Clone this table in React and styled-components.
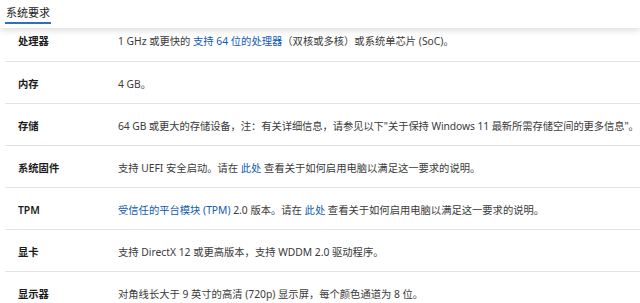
import React from 'react'
import styled, { createGlobalStyle } from 'styled-components'

const GlobalStyle = createGlobalStyle`
    html, body {
        margin: 0;
        padding: 0;
        background: #fff;
    }
    body {
        font-family: "Noto Sans", "Noto Sans CJK SC", sans-serif;
        color: #262626;
    }
`

const rows = [
    { label: '处理器', value: [
        '1 GHz 或更快的 ', { link: '支持 64 位的处理器' }, '（双核或多核）或系统单芯片 (SoC)。'
    ] },
    { label: '内存', value: ['4 GB。'] },
    { label: '存储', tight: true, value: [
        '64 GB 或更大的存储设备，注：有关详细信息，请参见以下"关于保持 Windows 11 最新所需存储空间的更多信息"。'
    ] },
    { label: '系统固件', value: [
        '支持 UEFI 安全启动。请在 ', { link: '此处' }, ' 查看关于如何启用电脑以满足这一要求的说明。'
    ] },
    { label: 'TPM', light: true, value: [
        { link: '受信任的平台模块 (TPM)' }, ' 2.0 版本。请在 ', { link: '此处' }, ' 查看关于如何启用电脑以满足这一要求的说明。'
    ] },
    { label: '显卡', value: ['支持 DirectX 12 或更高版本，支持 WDDM 2.0 驱动程序。'] },
    { label: '显示器', value: ['对角线长大于 9 英寸的高清 (720p) 显示屏，每个颜色通道为 8 位。'] },
]

const App = () => {
    return (
        <Page>
            <GlobalStyle />
            <TabBar>
                <Tab>系统要求</Tab>
            </TabBar>
            <Table>
                {rows.map(row => (
                    <Row key={row.label}>
                        <Label $light={row.light}>{row.label}</Label>
                        <Value $tight={row.tight}>
                            {row.value.map((part, i) => (
                                typeof part === 'string'
                                    ? <span key={i}>{part}</span>
                                    : <Link key={i}>{part.link}</Link>
                            ))}
                        </Value>
                    </Row>
                ))}
            </Table>
        </Page>
    )
}

const Page = styled.div`
    width: 640px;
    height: 303px;
    overflow: hidden;
    background: #fff;
`

const TabBar = styled.div`
    height: 28px;
    padding-left: 5px;
    display: flex;
    align-items: flex-start;
    position: relative;
    z-index: 1;
    box-shadow: 0 3px 6px rgba(0, 0, 0, .12);
    background: #fff;
`

const Tab = styled.div`
    font-size: 11px;
    line-height: 14px;
    padding: 6px 1px 2px;
    color: #222;
    border-bottom: 2px solid #2f6fbf;
`

const Table = styled.div`
    display: flex;
    flex-direction: column;
`

const Row = styled.div`
    display: grid;
    grid-template-columns: 100px 1fr;
    align-items: center;
    margin-left: 5px;
    height: 42px;
    padding: 2px 0 0 13px;
    box-sizing: border-box;
    border-bottom: 1px solid #e3e3e3;
    font-size: 10.3px;
    line-height: 20px;
    white-space: nowrap;

    &:first-child {
        height: 34px;
        padding-top: 0;
        padding-bottom: 7px;
    }
`

const Label = styled.div`
    font-weight: ${p => (p.$light ? 600 : 700)};
    color: #1b1b1b;
`

const Value = styled.div`
    color: #3a3a3a;
    letter-spacing: ${p => (p.$tight ? '-0.08px' : '0')};
`

const Link = styled.span`
    color: #0f5ab4;
`

export default App
